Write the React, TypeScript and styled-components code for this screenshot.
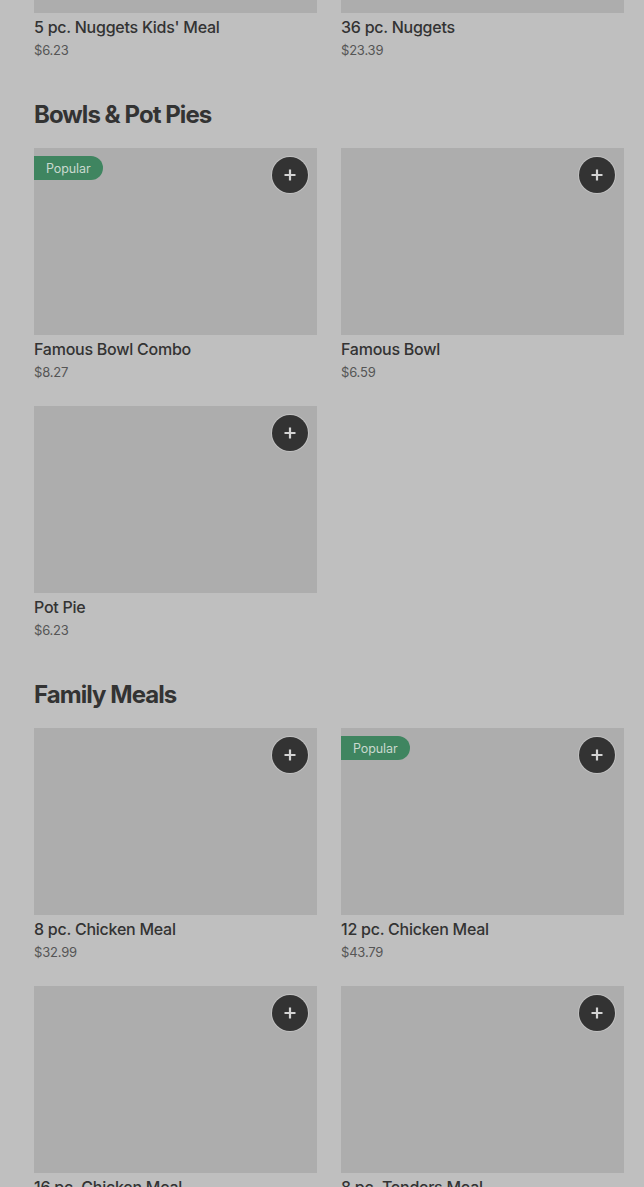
import React from "react";
import styled, { createGlobalStyle } from "styled-components";

const GlobalStyle = createGlobalStyle`
  html, body { margin: 0; padding: 0; background: #bfbfbf; overflow: hidden; }
  body { font-family: Inter, "Noto Sans", Arial, sans-serif; color: #333333; }
  * { box-sizing: border-box; }
`;

const Page = styled.main`
  padding: 0 20px 0 34px;
  margin-top: -174px;
  display: flex;
  flex-direction: column;
`;

const Section = styled.section`
  display: flex;
  flex-direction: column;
  margin-bottom: 39px;
`;

const Heading = styled.h2`
  margin: 0 0 17px;
  font-size: 24px;
  line-height: 32px;
  font-weight: 700;
  letter-spacing: -0.95px;
  color: #333333;
`;

const Grid = styled.div`
  display: grid;
  grid-template-columns: 283px 283px;
  column-gap: 24px;
  row-gap: 24px;
`;

const Card = styled.article`
  display: flex;
  flex-direction: column;
`;

const ImageBox = styled.div`
  position: relative;
  height: 187px;
  background: #adadad;
`;

const Badge = styled.span`
  position: absolute;
  left: 0;
  top: 8px;
  height: 24px;
  padding: 0 12px;
  display: flex;
  align-items: center;
  background: #3f8560;
  color: #c9d9cf;
  font-size: 12.5px;
  letter-spacing: -0.1px;
  border-radius: 0 12px 12px 0;
`;

const AddButton = styled.button`
  position: absolute;
  right: 9px;
  top: 9px;
  width: 36px;
  height: 36px;
  border-radius: 50%;
  border: none;
  padding: 0;
  background: #333333;
  box-shadow: 0 0 0 1px rgba(255, 255, 255, 0.25);
  display: flex;
  align-items: center;
  justify-content: center;
`;

const Title = styled.div`
  margin-top: 4px;
  font-size: 16px;
  line-height: 20px;
  font-weight: 500;
  letter-spacing: -0.25px;
  color: #333333;
`;

const Price = styled.div`
  margin-top: 3px;
  font-size: 13px;
  line-height: 20px;
  letter-spacing: -0.2px;
  color: #555555;
`;

type Item = { name: string; price: string; popular?: boolean };

const Plus = () => (
  <svg width="14" height="14" viewBox="0 0 14 14">
    <path d="M7 1.5v11M1.5 7h11" stroke="#d4d4d4" strokeWidth="2.2" />
  </svg>
);

const ItemCard = ({ item, showAdd = true }: { item: Item; showAdd?: boolean }) => (
  <Card>
    <ImageBox>
      {item.popular && <Badge>Popular</Badge>}
      {showAdd && (
        <AddButton aria-label="Add">
          <Plus />
        </AddButton>
      )}
    </ImageBox>
    <Title>{item.name}</Title>
    <Price>{item.price}</Price>
  </Card>
);

const topRow: Item[] = [
  { name: "5 pc. Nuggets Kids' Meal", price: "$6.23" },
  { name: "36 pc. Nuggets", price: "$23.39" },
];

const bowls: Item[] = [
  { name: "Famous Bowl Combo", price: "$8.27", popular: true },
  { name: "Famous Bowl", price: "$6.59" },
  { name: "Pot Pie", price: "$6.23" },
];

const family: Item[] = [
  { name: "8 pc. Chicken Meal", price: "$32.99" },
  { name: "12 pc. Chicken Meal", price: "$43.79", popular: true },
  { name: "16 pc. Chicken Meal", price: "$54.59" },
  { name: "8 pc. Tenders Meal", price: "$32.99" },
];

export default function App() {
  return (
    <>
      <GlobalStyle />
      <Page>
        <Section>
          <Grid>
            {topRow.map((it) => (
              <ItemCard key={it.name} item={it} showAdd={false} />
            ))}
          </Grid>
        </Section>
        <Section>
          <Heading>Bowls &amp; Pot Pies</Heading>
          <Grid>
            {bowls.map((it) => (
              <ItemCard key={it.name} item={it} />
            ))}
          </Grid>
        </Section>
        <Section>
          <Heading>Family Meals</Heading>
          <Grid>
            {family.map((it) => (
              <ItemCard key={it.name} item={it} />
            ))}
          </Grid>
        </Section>
      </Page>
    </>
  );
}
